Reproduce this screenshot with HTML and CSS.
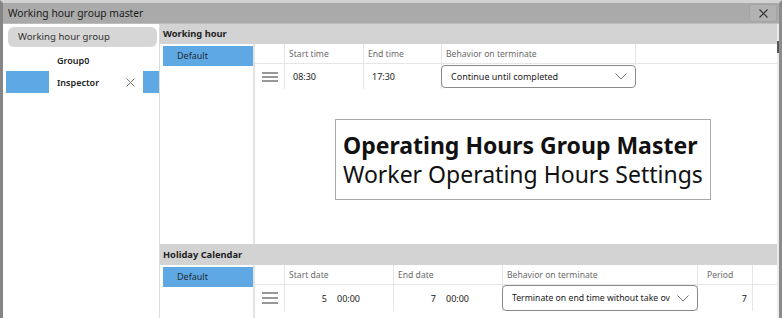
FILE: index.html
```html
<!DOCTYPE html>
<html lang="en">

<head>
    <meta charset="UTF-8">
    <meta name="viewport" content="width=device-width, initial-scale=1.0">
    <title>Working hour group master</title>
    <link rel="stylesheet" href="styles.css">
</head>

<body>
    <div class="window">
        <!-- Title bar -->
        <div class="titlebar">
            <span class="title">Working hour group master</span>
            <span class="close">
                <svg width="9" height="9" viewBox="0 0 9 9"><path d="M0.5 0.5 L8.5 8.5 M8.5 0.5 L0.5 8.5" stroke="#333" stroke-width="1.1" fill="none"/></svg>
            </span>
        </div>

        <div class="main">
            <!-- Group list -->
            <aside class="sidebar">
                <div class="pill">Working hour group</div>
                <div class="group-row">
                    <span class="mark"></span>
                    <span class="name">Group0</span>
                </div>
                <div class="group-row selected">
                    <span class="mark"></span>
                    <span class="name">Inspector</span>
                    <span class="del">
                        <svg width="9" height="9" viewBox="0 0 9 9"><path d="M0.5 0.5 L8.5 8.5 M8.5 0.5 L0.5 8.5" stroke="#777" stroke-width="1" fill="none"/></svg>
                    </span>
                    <span class="mark end"></span>
                </div>
            </aside>

            <div class="content">
                <!-- Working hour -->
                <section class="block block-hours">
                    <div class="block-head">Working hour</div>
                    <div class="block-body">
                        <div class="list"><div class="list-item">Default</div></div>
                        <div class="grid grid-hours">
                            <div class="cell head"></div>
                            <div class="cell head">Start time</div>
                            <div class="cell head">End time</div>
                            <div class="cell head">Behavior on terminate</div>
                            <div class="cell head last"></div>

                            <div class="cell row handle">
                                <svg width="16" height="10" viewBox="0 0 16 10"><path d="M0 1 H16 M0 5 H16 M0 9 H16" stroke="#333" stroke-width="1.2"/></svg>
                            </div>
                            <div class="cell row time">08:30</div>
                            <div class="cell row time">17:30</div>
                            <div class="cell row pick">
                                <div class="dropdown">
                                    <span class="value">Continue until completed</span>
                                    <svg width="12" height="7" viewBox="0 0 12 7"><path d="M0.5 0.5 L6 6 L11.5 0.5" stroke="#777" stroke-width="1" fill="none"/></svg>
                                </div>
                            </div>
                            <div class="cell row empty"></div>
                        </div>
                    </div>
                </section>

                <!-- Holiday Calendar -->
                <section class="block block-holiday">
                    <div class="block-head">Holiday Calendar</div>
                    <div class="block-body">
                        <div class="list"><div class="list-item">Default</div></div>
                        <div class="grid grid-holiday">
                            <div class="cell head"></div>
                            <div class="cell head">Start date</div>
                            <div class="cell head">End date</div>
                            <div class="cell head">Behavior on terminate</div>
                            <div class="cell head period-head">Period</div>
                            <div class="cell head last"></div>

                            <div class="cell row handle">
                                <svg width="16" height="12" viewBox="0 0 16 12"><path d="M0 1 H16 M0 6 H16 M0 11 H16" stroke="#333" stroke-width="1.2"/></svg>
                            </div>
                            <div class="cell row date"><span class="day">5</span><span>00:00</span></div>
                            <div class="cell row date"><span class="day">7</span><span>00:00</span></div>
                            <div class="cell row pick">
                                <div class="dropdown">
                                    <span class="value">Terminate on end time without take ov</span>
                                    <svg width="12" height="7" viewBox="0 0 12 7"><path d="M0.5 0.5 L6 6 L11.5 0.5" stroke="#777" stroke-width="1" fill="none"/></svg>
                                </div>
                            </div>
                            <div class="cell row period">7</div>
                            <div class="cell row empty"></div>
                        </div>
                    </div>
                </section>
            </div>

            <div class="scrollbar"><div class="thumb"></div></div>
        </div>

        <!-- Caption over the grid -->
        <div class="note">
            <div class="note-title">Operating Hours Group Master</div>
            <div class="note-sub">Worker Operating Hours Settings</div>
        </div>
    </div>
</body>
</html>
```

FILE: styles.css
```css
body {
    margin: 0;
    width: 782px;
    height: 318px;
    overflow: hidden;
    font-family: "Noto Sans", "Open Sans", sans-serif;
    color: #222;
    background: #ffffff;
}

.window {
    position: relative;
    height: 315px;
    border-top: 3px solid #d2d2d2;
    border-left: 3px solid #858585;
    border-right: 3px solid #8c8c8c;
    display: flex;
    flex-direction: column;
}

.titlebar {
    height: 20px;
    background-color: #aaaaaa;
    border-bottom: 1px solid #bdbdbd;
    display: flex;
    align-items: center;
    justify-content: space-between;
    padding-left: 5px;
}

.title {
    font-size: 10.3px;
    color: #1a1a1a;
}

.close {
    width: 26px;
    height: 16px;
    margin-right: 2px;
    background-color: #b2b2b2;
    border: 1px solid #a4a4a4;
    border-radius: 3px;
    display: flex;
    align-items: center;
    justify-content: center;
}

.main {
    flex: 1;
    display: flex;
    min-height: 0;
}

/* left list */
.sidebar {
    width: 156px;
    border-right: 1px solid #dcdcdc;
    padding-top: 3px;
}

.pill {
    height: 20px;
    margin: 0 2px 2px 5px;
    padding-left: 10px;
    background-color: #d6d6d6;
    border-radius: 6px;
    font-size: 9.6px;
    line-height: 20px;
    color: #333;
}

.group-row {
    height: 22px;
    display: flex;
    align-items: center;
    padding-left: 3px;
    font-size: 9px;
    font-weight: 600;
}

.group-row .mark {
    width: 43px;
    height: 22px;
    margin-right: 8px;
}

.group-row .name {
    flex: 1;
}

.group-row .del {
    width: 9px;
    height: 9px;
    margin-right: 8px;
    display: flex;
}

.group-row .mark.end {
    width: 16px;
    margin-right: 0;
}

.group-row.selected .mark {
    background-color: #5ea9e3;
}

/* right side */
.content {
    flex: 1;
    display: flex;
    flex-direction: column;
}

.block-hours {
    height: 220px;
    display: flex;
    flex-direction: column;
}

.block-holiday {
    flex: 1;
    display: flex;
    flex-direction: column;
}

.block-head {
    height: 20px;
    background-color: #d3d3d3;
    padding-left: 3px;
    font-size: 9.3px;
    font-weight: 700;
    line-height: 20px;
    color: #222;
}

.block-holiday .block-head {
    height: 21px;
    line-height: 21px;
}

.block-body {
    flex: 1;
    display: flex;
}

.list {
    width: 90px;
    padding: 2px 0 0 3px;
    border-right: 2px solid #e4e4e4;
}

.list-item {
    height: 20px;
    background-color: #5ea9e3;
    padding-left: 14px;
    font-size: 9px;
    line-height: 19px;
    color: #1f2a36;
}

.grid {
    flex: 1;
    display: grid;
    align-content: start;
    font-size: 8.6px;
}

.grid-hours {
    grid-template-columns: 30px 79px 78px 194px 1fr;
    grid-template-rows: 20px 25px;
}

.grid-holiday {
    grid-template-columns: 30px 109px 109px 195px 55px 1fr;
    grid-template-rows: 20px 26px;
}

.cell {
    border-right: 1px solid #e6e6e6;
    display: flex;
    align-items: center;
    white-space: nowrap;
    overflow: hidden;
    min-width: 0;
}

.cell.head {
    border-bottom: 1px solid #e6e6e6;
    color: #6a6a6a;
    padding-left: 4px;
}

.cell.last,
.cell.empty {
    border-right: none;
}

.cell.pick {
    border-right: none;
    overflow: visible;
}

.grid-holiday .cell.pick {
    border-right: 1px solid #e6e6e6;
}

.cell.handle {
    justify-content: center;
}

.cell.time {
    padding-left: 8px;
    font-size: 9px;
}

.cell.date {
    font-size: 9px;
}

.cell.date .day {
    width: 42px;
    text-align: right;
    margin-right: 10px;
}

.cell.period-head {
    padding-left: 9px;
}

.cell.period {
    justify-content: flex-end;
    padding-right: 5px;
    font-size: 9px;
}

.dropdown {
    flex: 1;
    min-width: 0;
    height: 23px;
    margin-left: -1px;
    box-sizing: border-box;
    border: 1px solid #8a8a8a;
    border-radius: 4px;
    background: #ffffff;
    display: flex;
    align-items: center;
    justify-content: space-between;
    padding: 0 8px 0 9px;
    font-size: 9px;
}

.dropdown .value {
    overflow: hidden;
}

.grid-holiday .dropdown {
    height: 26px;
    margin-right: -1px;
    font-size: 8.7px;
}

.grid-holiday .dropdown svg {
    margin-left: 6px;
    flex-shrink: 0;
}

.scrollbar {
    width: 2px;
    background-color: #ececec;
}

.scrollbar .thumb {
    height: 12px;
    margin-top: 17px;
    background-color: #555;
}

.note {
    position: absolute;
    left: 332px;
    top: 116px;
    width: 360px;
    padding: 11px 7px 10px 7px;
    border: 1px solid #aaaaaa;
    background: #ffffff;
    font-size: 23px;
    line-height: 29px;
    color: #111;
}

.note-title {
    font-weight: 700;
}
```
